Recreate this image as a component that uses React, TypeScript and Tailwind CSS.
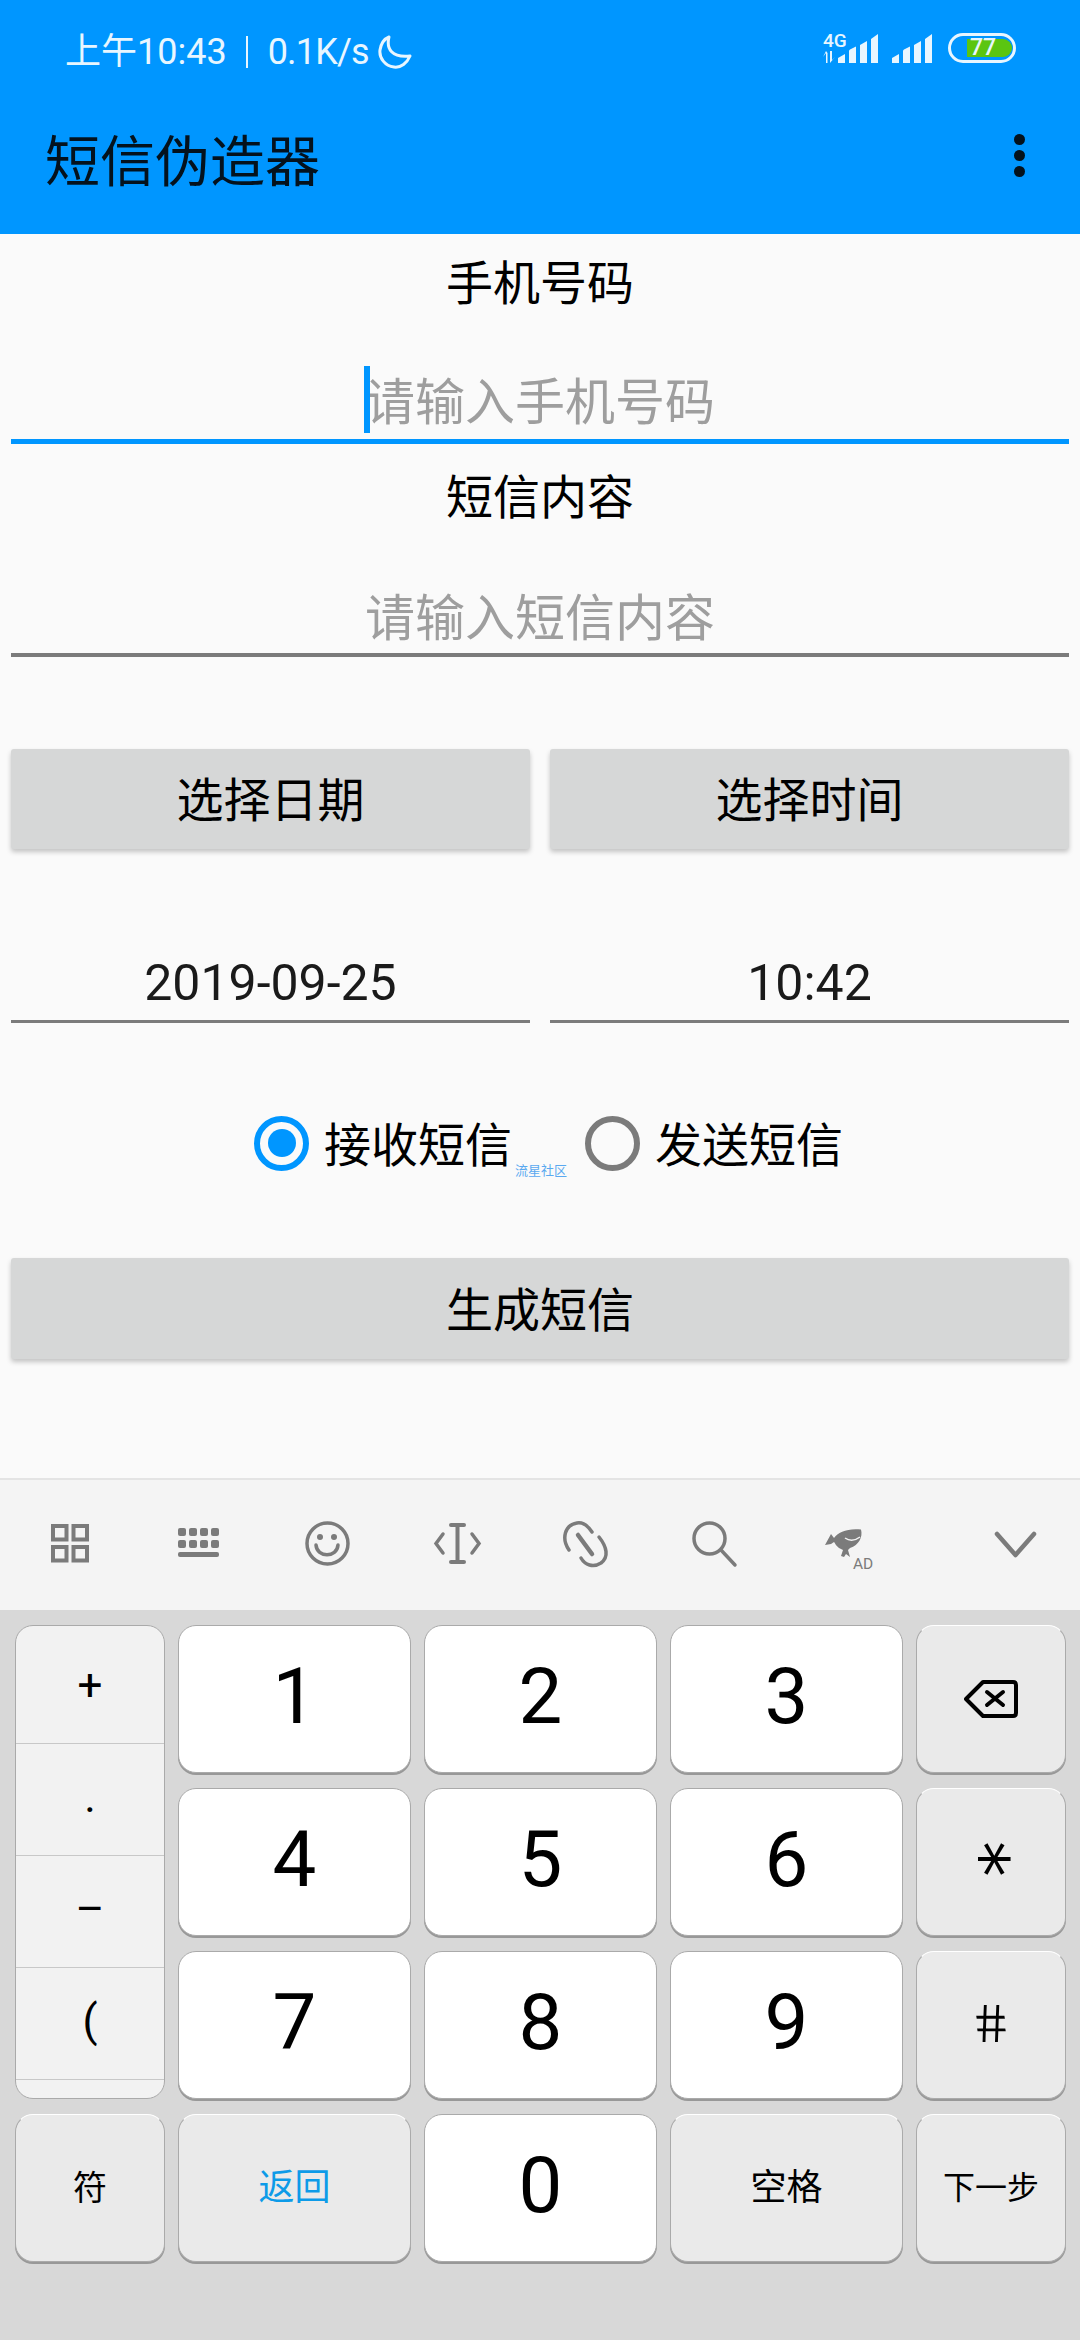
import React from "react";

const sans = "font-[Roboto,'Noto_Sans_CJK_SC',sans-serif]";

function Signal() {
  return (
    <g fill="#e8f6ff">
      <path d="M0 29 L0 24 L7 20 L7 29 Z" />
      <path d="M11 29 L11 17 Q11 16 12 15.5 L18 12.5 L18 29 Z" />
      <path d="M22 29 L22 11 L29 7 L29 29 Z" />
      <path d="M33 29 L33 5 L40 0 L40 29 Z" />
    </g>
  );
}

function StatusBar() {
  return (
    <div className="flex h-[80px] items-start justify-between pl-[65px] pr-[64px] pt-[30px]">
      <div className="flex items-center pt-[2px] text-[36px] leading-[40px] text-[#e8f6ff]">
        <span>上午10:43</span>
        <span className="ml-[19px] mr-[20px] h-[32px] w-[2px] bg-[#e8f6ff]" />
        <span className="tracking-[-0.8px]">0.1K/s</span>
        <svg width="34" height="34" viewBox="0 0 34 34" fill="none" className="ml-[9px]">
          <path d="M11 2 C8 14 14 23 32 21 C29 28 23 33 16 32 C7 31 1 23 2 15 C3 9 6 4 11 2 Z" stroke="#e8f6ff" strokeWidth="3" strokeLinejoin="round" />
        </svg>
      </div>
      <div className="flex items-start pt-[3px]">
        <svg width="112" height="44" viewBox="0 -12 112 44" className="-mt-[12px] mr-[14px]" fill="#e8f6ff">
          <text x="1" y="14" fontSize="19" fontFamily="Roboto" fontWeight="500">4G</text>
          <path d="M1 24 L4 20 V30 H5.5 V20 L4 18 Z" />
          <path d="M8 18 H10 V27 L13 24 L8 30 Z" />
          <g transform="translate(16 1)"><Signal /></g>
          <g transform="translate(70 1)"><Signal /></g>
        </svg>
        <div className="relative flex h-[30px] w-[68px] items-center rounded-full border-[3px] border-[#e8f6ff] pl-[16px]">
          <div className="flex h-[18px] w-[45px] items-center rounded-r-full bg-[#5bc511] pl-[3px] text-[23px] font-medium leading-[18px] text-[#e8f6ff]">
            77
          </div>
        </div>
      </div>
    </div>
  );
}

function Toolbar() {
  return (
    <div className="flex h-[154px] items-start justify-between pl-[45px] pr-[55px] pt-[50px] text-[55px] leading-[64px] text-[#04121d]">
      <span>短信伪造器</span>
      <div className="flex flex-col gap-[5px] pt-[4px]">
        <span className="h-[11px] w-[11px] rounded-full bg-[#04121d]" />
        <span className="h-[11px] w-[11px] rounded-full bg-[#04121d]" />
        <span className="h-[11px] w-[11px] rounded-full bg-[#04121d]" />
      </div>
    </div>
  );
}

function FieldLabel({ text, className }: { text: string; className: string }) {
  return <div className={`flex items-center justify-center pt-[5px] text-[47px] text-black ${className}`}>{text}</div>;
}

function Radio({ checked, label }: { checked: boolean; label: string }) {
  return (
    <div className="flex items-center gap-[15px]">
      <div className={`flex h-[55px] w-[55px] items-center justify-center rounded-full border-[6px] ${checked ? "border-[#0096ff]" : "border-[#7b7b7b]"}`}>
        {checked && <div className="h-[28px] w-[28px] rounded-full bg-[#0096ff]" />}
      </div>
      <span className="pt-[5px] text-[47px] leading-[51px] text-black">{label}</span>
    </div>
  );
}

function ToolIcons() {
  const c = "#7b7b7b";
  return (
    <div className="h-[132px] border-t-[2px] border-[#e4e4e4] bg-[#f4f4f4] pt-[32px]">
      <svg width="1080" height="70" viewBox="0 0 1080 70" fill="none" stroke={c} strokeWidth="4">
        {/* apps */}
        <g transform="translate(51 12)">
          <rect x="2" y="2" width="13.5" height="13.5" />
          <rect x="22.5" y="2" width="13.5" height="13.5" />
          <rect x="2" y="23" width="13.5" height="13.5" />
          <rect x="22.5" y="23" width="13.5" height="13.5" />
        </g>
        {/* keyboard */}
        <g transform="translate(178 16)" fill={c} stroke="none">
          <rect x="0" y="0" width="8" height="8" rx="2" />
          <rect x="11" y="0" width="8" height="8" rx="2" />
          <rect x="22" y="0" width="8" height="8" rx="2" />
          <rect x="33" y="0" width="8" height="8" rx="2" />
          <rect x="0" y="12" width="8" height="8" rx="2" />
          <rect x="11" y="12" width="8" height="8" rx="2" />
          <rect x="22" y="12" width="8" height="8" rx="2" />
          <rect x="33" y="12" width="8" height="8" rx="2" />
          <rect x="0" y="24" width="41" height="5" rx="2" />
        </g>
        {/* smile */}
        <g transform="translate(305 9)">
          <circle cx="22.5" cy="22.5" r="20.5" strokeWidth="3.5" />
          <circle cx="15" cy="16" r="3" fill={c} stroke="none" />
          <circle cx="29" cy="16" r="3" fill={c} stroke="none" />
          <path d="M11 24 C12 37 32 37 33 24" strokeWidth="3.5" strokeLinecap="round" />
        </g>
        {/* cursor */}
        <g transform="translate(434 11)" strokeLinecap="round">
          <path d="M23.5 2 V39 M17 2 H30 M17 39 H30" strokeWidth="4" />
          <path d="M9 11 L2 20.5 L9 30 M38 11 L45 20.5 L38 30" strokeWidth="3.5" />
        </g>
        {/* link */}
        <g transform="translate(563 9)" strokeLinecap="round" strokeWidth="3.5">
          <path d="M6 29 C-2 17 2 4 14 2 C20 1 25 5 29 11" />
          <path d="M36 16 C44 26 46 36 38 42 C30 47 22 44 18 37" />
          <path d="M15 14 L29 33" strokeWidth="4.5" />
        </g>
        {/* search */}
        <g transform="translate(692 9)" strokeWidth="3.5" strokeLinecap="round">
          <circle cx="17.5" cy="17.5" r="15.5" />
          <path d="M29 29 L43 44" />
        </g>
        {/* fish */}
        <g transform="translate(810 -2)" fill={c} stroke="none">
          <path d="M15 35 L21 24 L24 28 C28 22 38 18 51 19.5 C53 27 49 35 40 38 L38 40 L40 47 L36 44 L34 47 L31 46 L33 40 L29 38 C26 36 25 33 24 32 L21 34 Z" />
          <path d="M35 28 Q42 33 50 27" stroke="#f4f4f4" strokeWidth="1.5" fill="none" />
        </g>
        <text x="853" y="57" fontSize="15.5" fontFamily="Roboto" fill={c} stroke="none">AD</text>
        {/* collapse */}
        <path d="M997 22 L1015.5 43 L1034 22" strokeWidth="4.5" strokeLinecap="round" strokeLinejoin="round" />
      </svg>
    </div>
  );
}

function Key({ label, tone, className = "" }: { label: React.ReactNode; tone: "white" | "gray"; className?: string }) {
  const bg = tone === "white" ? "bg-white" : "bg-[#eaeaea] border-t-white";
  return (
    <div className={`flex items-center justify-center rounded-[18px] border border-[#aaaaaa] shadow-[0_2px_0_#989898] ${bg} ${className}`}>
      {label}
    </div>
  );
}

function Keyboard() {
  const digit = "mb-[4px] text-[78px] leading-none text-black";
  const side = ["+", ".", "–", "("];
  return (
    <div className="h-[730px] bg-[#d8d8d8] pl-[15px] pt-[15px]">
      <div className="grid grid-cols-[150px_233px_233px_233px_150px] grid-rows-[148px_148px_148px_148px] gap-x-[13px] gap-y-[15px]">
        <div className="row-span-3 flex flex-col overflow-hidden rounded-[18px] border border-[#aaaaaa] bg-[#f2f2f2] text-[44px] leading-none text-black">
          {side.map((s, i) => (
            <div key={s} className={`flex items-center justify-center border-b border-[#c8c8c8] ${i === 0 ? "h-[118px]" : "h-[112px] pb-[6px]"}`}>
              {s}
            </div>
          ))}
        </div>
        <Key tone="white" label={<span className={digit}>1</span>} />
        <Key tone="white" label={<span className={digit}>2</span>} />
        <Key tone="white" label={<span className={digit}>3</span>} />
        <Key
          tone="gray"
          label={
            <svg width="54" height="38" viewBox="0 0 54 38" fill="none" stroke="#000" strokeWidth="4" strokeLinejoin="round" strokeLinecap="round">
              <path d="M19 2 H49 Q52 2 52 5 V33 Q52 36 49 36 H19 L2 19 Z" />
              <path d="M23 12 L39 25 M39 12 L23 25" />
            </svg>
          }
        />
        <Key tone="white" className="col-start-2" label={<span className={digit}>4</span>} />
        <Key tone="white" label={<span className={digit}>5</span>} />
        <Key tone="white" label={<span className={digit}>6</span>} />
        <Key tone="gray" label={<span className="mr-[16px] mb-[6px] rotate-90 font-['DejaVu_Sans'] text-[72px] leading-none text-black">*</span>} />
        <Key tone="white" className="col-start-2" label={<span className={digit}>7</span>} />
        <Key tone="white" label={<span className={digit}>8</span>} />
        <Key tone="white" label={<span className={digit}>9</span>} />
        <Key tone="gray" label={<span className="mb-[4px] skew-x-[10deg] font-['Liberation_Sans'] text-[54px] leading-none text-black">#</span>} />
        <Key tone="gray" label={<span className="text-[34px] text-black">符</span>} />
        <Key tone="gray" label={<span className="text-[36px] text-[#0d9be8]">返回</span>} />
        <Key tone="white" label={<span className={digit}>0</span>} />
        <Key tone="gray" label={<span className="text-[36px] text-black">空格</span>} />
        <Key tone="gray" label={<span className="text-[32px] text-black">下一步</span>} />
      </div>
    </div>
  );
}

export default function App() {
  return (
    <div className={`flex h-[2340px] w-[1080px] flex-col overflow-hidden bg-[#fafafa] ${sans}`}>
      <header className="h-[234px] bg-[#0096ff]">
        <StatusBar />
        <Toolbar />
      </header>

      <main className="h-[1244px] px-[11px]">
        <FieldLabel text="手机号码" className="h-[96px]" />
        <div className="relative flex h-[114px] items-start justify-center border-b-[5px] border-[#0096ff] pt-[41px] text-[50px] leading-[64px] text-[#9e9e9e]">
          <span>请输入手机号码</span>
          <span className="absolute left-[353px] top-[36px] h-[67px] w-[6px] bg-[#0096ff]" />
        </div>
        <FieldLabel text="短信内容" className="h-[104px]" />
        <div className="flex h-[109px] items-start justify-center border-b-[4px] border-[#7b7b7b] pt-[39px] text-[50px] leading-[64px] text-[#9e9e9e]">
          请输入短信内容
        </div>

        <div className="mt-[92px] grid grid-cols-2 gap-x-[20px]">
          <button className="h-[100px] rounded-[3px] bg-[#d6d7d7] pt-[5px] text-[47px] text-black shadow-[0_3px_5px_rgba(0,0,0,0.22)]">选择日期</button>
          <button className="h-[100px] rounded-[3px] bg-[#d6d7d7] pt-[5px] text-[47px] text-black shadow-[0_3px_5px_rgba(0,0,0,0.22)]">选择时间</button>
        </div>

        <div className="grid grid-cols-2 gap-x-[20px] pt-[100px]">
          <div className="flex h-[74px] items-start justify-center border-b-[3px] border-[#7b7b7b] pt-[2px] text-[50px] leading-[64px] text-[#1a1a1a]">2019-09-25</div>
          <div className="flex h-[74px] items-start justify-center border-b-[3px] border-[#7b7b7b] pt-[2px] text-[50px] leading-[64px] text-[#1a1a1a]">10:42</div>
        </div>

        <div className="relative mt-[92px] flex items-center justify-center gap-[73px] pl-[17px]">
          <Radio checked label="接收短信" />
          <Radio checked={false} label="发送短信" />
          <span className="absolute left-[504px] top-[49px] text-[13px] leading-[14px] text-[#5aa9f0]">流星社区</span>
        </div>

        <button className="mt-[87px] h-[101px] w-full rounded-[3px] bg-[#d6d7d7] pt-[5px] text-[47px] text-black shadow-[0_3px_5px_rgba(0,0,0,0.22)]">生成短信</button>
      </main>

      <ToolIcons />
      <Keyboard />
    </div>
  );
}
